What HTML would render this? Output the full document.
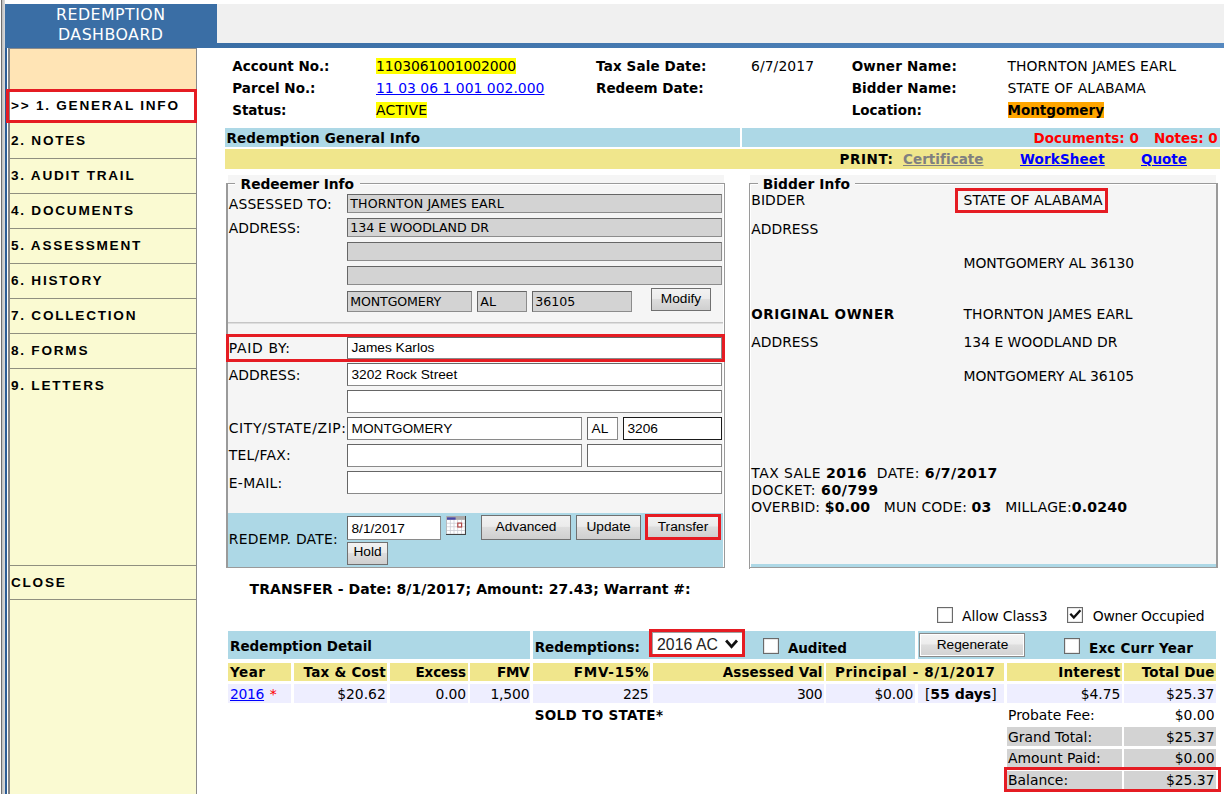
<!DOCTYPE html>
<html lang="en"><head><meta charset="utf-8"><title>Redemption Dashboard</title>
<style>
html,body{margin:0;padding:0;background:#fff;}
body{width:1224px;height:794px;position:relative;overflow:hidden;font-family:"DejaVu Sans", "Liberation Sans", sans-serif;color:#000;}
.t{position:absolute;white-space:nowrap;margin:0;padding:0;}
.r{position:absolute;margin:0;padding:0;}
.a{font-family:"Liberation Sans", sans-serif;}
a{color:#0000ff;text-decoration:underline;}
b{font-weight:bold;font-size:14.1px;}
</style></head><body>
<div class="r " style="left:1px;top:0px;width:1px;height:794px;background:#707070;"></div>
<div class="r " style="left:2px;top:0px;width:3px;height:794px;background:linear-gradient(90deg,#bdbdbd,#dcdcdc);"></div>
<div class="r " style="left:5px;top:4px;width:2px;height:790px;background:#2c5d96;"></div>
<div class="r " style="left:5px;top:4px;width:212px;height:44px;background:#3a6ea5;"></div>
<div class="r " style="left:217px;top:4px;width:1007px;height:39px;background:#f0f0f0;"></div>
<div class="r " style="left:217px;top:43px;width:1007px;height:5px;background:linear-gradient(90deg,#3a6ea5,#5588bf);"></div>
<div class="t" style="top:4.00px;font-size:15.8px;line-height:21px;left:56.00px;color:#fff;letter-spacing:0.464px;">REDEMPTION</div>
<div class="t" style="top:24.00px;font-size:15.8px;line-height:21px;left:58.00px;color:#fff;letter-spacing:0.467px;">DASHBOARD</div>
<div class="r " style="left:8px;top:48px;width:189px;height:746px;background:#fafad2;border:1px solid #8a8a8a;border-left:2px solid #858585;border-bottom:none;box-sizing:border-box;"></div>
<div class="r " style="left:10px;top:49px;width:186px;height:40px;background:#ffe4b5;"></div>
<div class="r " style="left:10px;top:158px;width:186px;height:1px;background:#8f8f80;"></div>
<div class="r " style="left:10px;top:193px;width:186px;height:1px;background:#8f8f80;"></div>
<div class="r " style="left:10px;top:228px;width:186px;height:1px;background:#8f8f80;"></div>
<div class="r " style="left:10px;top:263px;width:186px;height:1px;background:#8f8f80;"></div>
<div class="r " style="left:10px;top:298px;width:186px;height:1px;background:#8f8f80;"></div>
<div class="r " style="left:10px;top:333px;width:186px;height:1px;background:#8f8f80;"></div>
<div class="r " style="left:10px;top:368px;width:186px;height:1px;background:#8f8f80;"></div>
<div class="r " style="left:10px;top:565px;width:186px;height:1px;background:#8f8f80;"></div>
<div class="r " style="left:10px;top:599px;width:186px;height:1px;background:#8f8f80;"></div>
<div class="r " style="left:10px;top:89px;width:186px;height:34px;background:#fff;"></div>
<div class="r " style="left:6px;top:89px;width:191px;height:34px;border:3px solid #e51c23;box-sizing:border-box;"></div>
<div class="t a" style="top:97.00px;font-size:13.6px;line-height:18px;left:11.00px;font-weight:bold;color:#000;letter-spacing:1.750px;">&gt;&gt; 1. GENERAL INFO</div>
<div class="t a" style="top:132.00px;font-size:13.6px;line-height:18px;left:11.00px;font-weight:bold;color:#000;letter-spacing:1.750px;">2. NOTES</div>
<div class="t a" style="top:167.00px;font-size:13.6px;line-height:18px;left:11.00px;font-weight:bold;color:#000;letter-spacing:1.750px;">3. AUDIT TRAIL</div>
<div class="t a" style="top:202.00px;font-size:13.6px;line-height:18px;left:11.00px;font-weight:bold;color:#000;letter-spacing:1.750px;">4. DOCUMENTS</div>
<div class="t a" style="top:237.00px;font-size:13.6px;line-height:18px;left:11.00px;font-weight:bold;color:#000;letter-spacing:1.750px;">5. ASSESSMENT</div>
<div class="t a" style="top:272.00px;font-size:13.6px;line-height:18px;left:11.00px;font-weight:bold;color:#000;letter-spacing:1.750px;">6. HISTORY</div>
<div class="t a" style="top:307.00px;font-size:13.6px;line-height:18px;left:11.00px;font-weight:bold;color:#000;letter-spacing:1.750px;">7. COLLECTION</div>
<div class="t a" style="top:342.00px;font-size:13.6px;line-height:18px;left:11.00px;font-weight:bold;color:#000;letter-spacing:1.750px;">8. FORMS</div>
<div class="t a" style="top:377.00px;font-size:13.6px;line-height:18px;left:11.00px;font-weight:bold;color:#000;letter-spacing:1.750px;">9. LETTERS</div>
<div class="t a" style="top:574.00px;font-size:13.6px;line-height:18px;left:11.00px;font-weight:bold;color:#000;letter-spacing:1.750px;">CLOSE</div>
<div class="t" style="top:57.00px;font-size:13.5px;line-height:18px;left:232.30px;font-weight:bold;letter-spacing:-0.000px;">Account No.:</div>
<div class="t" style="top:79.00px;font-size:13.5px;line-height:18px;left:232.30px;font-weight:bold;letter-spacing:0.031px;">Parcel No.:</div>
<div class="t" style="top:101.00px;font-size:13.5px;line-height:18px;left:232.30px;font-weight:bold;letter-spacing:-0.099px;">Status:</div>
<div class="t" style="top:57.00px;font-size:13.9px;line-height:18px;left:376.00px;letter-spacing:-0.094px;"><span style="background:#ff0">1103061001002000</span></div>
<div class="t" style="top:79.00px;font-size:13.9px;line-height:18px;left:376.00px;letter-spacing:0.024px;"><a>11 03 06 1 001 002.000</a></div>
<div class="t" style="top:101.00px;font-size:13.9px;line-height:18px;left:376.00px;letter-spacing:0.234px;"><span style="background:#ff0">ACTIVE</span></div>
<div class="t" style="top:57.00px;font-size:13.5px;line-height:18px;left:596.10px;font-weight:bold;letter-spacing:0.128px;">Tax Sale Date:</div>
<div class="t" style="top:79.00px;font-size:13.5px;line-height:18px;left:596.10px;font-weight:bold;letter-spacing:-0.011px;">Redeem Date:</div>
<div class="t" style="top:57.00px;font-size:13.9px;line-height:18px;left:751.00px;letter-spacing:0.087px;">6/7/2017</div>
<div class="t" style="top:57.00px;font-size:13.5px;line-height:18px;left:851.70px;font-weight:bold;letter-spacing:0.199px;">Owner Name:</div>
<div class="t" style="top:79.00px;font-size:13.5px;line-height:18px;left:851.70px;font-weight:bold;letter-spacing:0.118px;">Bidder Name:</div>
<div class="t" style="top:101.00px;font-size:13.5px;line-height:18px;left:851.70px;font-weight:bold;letter-spacing:-0.007px;">Location:</div>
<div class="t" style="top:57.00px;font-size:13.9px;line-height:18px;left:1007.50px;letter-spacing:0.075px;">THORNTON JAMES EARL</div>
<div class="t" style="top:79.00px;font-size:13.9px;line-height:18px;left:1007.50px;letter-spacing:0.063px;">STATE OF ALABAMA</div>
<div class="t" style="top:101.00px;font-size:13.5px;line-height:18px;left:1007.50px;font-weight:bold;letter-spacing:0.010px;"><span style="background:#ffa500">Montgomery</span></div>
<div class="r " style="left:225px;top:128px;width:515px;height:19px;background:#add8e6;"></div>
<div class="r " style="left:742px;top:128px;width:478px;height:19px;background:#add8e6;"></div>
<div class="r " style="left:225px;top:149px;width:995px;height:19.5px;background:#f0e68c;"></div>
<div class="t" style="top:129.00px;font-size:13.5px;line-height:18px;left:226.50px;font-weight:bold;letter-spacing:0.129px;">Redemption General Info</div>
<div class="t" style="top:129.00px;font-size:13.5px;line-height:18px;left:1033.40px;font-weight:bold;color:#f00;letter-spacing:0.062px;">Documents: 0</div>
<div class="t" style="top:129.00px;font-size:13.5px;line-height:18px;left:1154.00px;font-weight:bold;color:#f00;letter-spacing:-0.003px;">Notes: 0</div>
<div class="t" style="top:150.00px;font-size:13.5px;line-height:18px;left:839.50px;font-weight:bold;letter-spacing:0.603px;">PRINT:</div>
<div class="t" style="top:150.00px;font-size:13.5px;line-height:18px;left:903.00px;font-weight:bold;letter-spacing:0.047px;"><a style="color:#808080">Certificate</a></div>
<div class="t" style="top:150.00px;font-size:13.5px;line-height:18px;left:1020.00px;font-weight:bold;letter-spacing:0.147px;"><a>WorkSheet</a></div>
<div class="t" style="top:150.00px;font-size:13.5px;line-height:18px;left:1141.00px;font-weight:bold;letter-spacing:0.004px;"><a>Quote</a></div>
<div class="r " style="left:228px;top:175px;width:496px;height:392px;background:#f5f5f5;"></div>
<div class="r " style="left:226px;top:183px;width:2px;height:385px;background:#9a9a9a;"></div>
<div class="r " style="left:228px;top:183px;width:497px;height:1px;background:#9a9a9a;"></div>
<div class="r " style="left:228px;top:184px;width:496px;height:1px;background:#fff;"></div>
<div class="r " style="left:723px;top:185px;width:1px;height:382px;background:#fff;"></div>
<div class="r " style="left:724px;top:184px;width:1px;height:384px;background:#9a9a9a;"></div>
<div class="r " style="left:226px;top:567px;width:499px;height:1px;background:#9a9a9a;"></div>
<div class="r " style="left:235px;top:176px;width:125px;height:16px;background:#f5f5f5;"></div>
<div class="t" style="top:175.00px;font-size:13.8px;line-height:18px;left:240.60px;font-weight:bold;letter-spacing:-0.080px;">Redeemer Info</div>
<div class="t" style="top:195.00px;font-size:13.9px;line-height:18px;left:228.80px;letter-spacing:0.146px;">ASSESSED TO:</div>
<div class="t" style="top:219.00px;font-size:13.9px;line-height:18px;left:228.80px;letter-spacing:-0.006px;">ADDRESS:</div>
<div class="r " style="left:347px;top:194px;width:375px;height:18.5px;background:#d3d3d3;border:1px solid #8c8c8c;border-top-color:#666;border-left-color:#666;box-sizing:border-box;"></div>
<div class="t" style="top:196.00px;font-size:12.6px;line-height:16px;left:350.30px;letter-spacing:0.103px;">THORNTON JAMES EARL</div>
<div class="r " style="left:347px;top:218px;width:375px;height:18.5px;background:#d3d3d3;border:1px solid #8c8c8c;border-top-color:#666;border-left-color:#666;box-sizing:border-box;"></div>
<div class="t" style="top:220.00px;font-size:12.6px;line-height:16px;left:350.30px;letter-spacing:-0.048px;">134 E WOODLAND DR</div>
<div class="r " style="left:347px;top:242px;width:375px;height:18.5px;background:#d3d3d3;border:1px solid #8c8c8c;border-top-color:#666;border-left-color:#666;box-sizing:border-box;"></div>
<div class="r " style="left:347px;top:266px;width:375px;height:18.5px;background:#d3d3d3;border:1px solid #8c8c8c;border-top-color:#666;border-left-color:#666;box-sizing:border-box;"></div>
<div class="r " style="left:347px;top:291px;width:125px;height:21px;background:#d3d3d3;border:1px solid #8c8c8c;border-top-color:#666;border-left-color:#666;box-sizing:border-box;"></div>
<div class="t" style="top:294.00px;font-size:12.6px;line-height:16px;left:350.30px;letter-spacing:-0.126px;">MONTGOMERY</div>
<div class="r " style="left:477px;top:291px;width:50px;height:21px;background:#d3d3d3;border:1px solid #8c8c8c;border-top-color:#666;border-left-color:#666;box-sizing:border-box;"></div>
<div class="t" style="top:294.00px;font-size:12.6px;line-height:16px;left:480.30px;">AL</div>
<div class="r " style="left:532px;top:291px;width:100px;height:21px;background:#d3d3d3;border:1px solid #8c8c8c;border-top-color:#666;border-left-color:#666;box-sizing:border-box;"></div>
<div class="t" style="top:294.00px;font-size:12.6px;line-height:16px;left:535.30px;">36105</div>
<div class="r " style="left:651px;top:288px;width:60px;height:23px;border:1px solid #707070;box-sizing:border-box;background:linear-gradient(#f2f2f2,#ebebeb 45%,#dddddd 50%,#cfcfcf);"></div>
<div class="t a" style="top:290.00px;font-size:13.7px;line-height:18px;left:651.00px;width:60px;text-align:center;">Modify</div>
<div class="r " style="left:228px;top:322px;width:495px;height:1px;background:#c6c6c6;"></div>
<div class="r " style="left:228px;top:323px;width:495px;height:1px;background:#dedede;"></div>
<div class="r " style="left:347px;top:337px;width:375px;height:21.5px;background:#fff;border:1px solid #8a8a8a;border-top-color:#666;border-left-color:#666;box-sizing:border-box;"></div>
<div class="t a" style="top:339.00px;font-size:13.7px;line-height:18px;left:351.50px;">James Karlos</div>
<div class="r " style="left:226px;top:334px;width:499px;height:27.5px;border:3px solid #e51c23;box-sizing:border-box;"></div>
<div class="t" style="top:339.00px;font-size:13.9px;line-height:18px;left:228.80px;letter-spacing:0.700px;">PAID BY:</div>
<div class="t" style="top:366.00px;font-size:13.9px;line-height:18px;left:228.80px;letter-spacing:-0.006px;">ADDRESS:</div>
<div class="r " style="left:347px;top:363px;width:375px;height:23px;background:#fff;border:1px solid #8a8a8a;border-top-color:#666;border-left-color:#666;box-sizing:border-box;"></div>
<div class="t a" style="top:366.00px;font-size:13.7px;line-height:18px;left:351.50px;">3202 Rock Street</div>
<div class="r " style="left:347px;top:390px;width:375px;height:23px;background:#fff;border:1px solid #8a8a8a;border-top-color:#666;border-left-color:#666;box-sizing:border-box;"></div>
<div class="t" style="top:419.00px;font-size:13.9px;line-height:18px;left:228.80px;letter-spacing:0.607px;">CITY/STATE/ZIP:</div>
<div class="r " style="left:347px;top:417px;width:234.5px;height:23px;background:#fff;border:1px solid #8a8a8a;border-top-color:#666;border-left-color:#666;box-sizing:border-box;"></div>
<div class="t a" style="top:420.00px;font-size:13.7px;line-height:18px;left:351.50px;">MONTGOMERY</div>
<div class="r " style="left:587px;top:417px;width:31px;height:23px;background:#fff;border:1px solid #8a8a8a;border-top-color:#666;border-left-color:#666;box-sizing:border-box;"></div>
<div class="t a" style="top:420.00px;font-size:13.7px;line-height:18px;left:591.50px;">AL</div>
<div class="r " style="left:623px;top:417px;width:99px;height:23px;background:#fff;border:1.5px solid #1a1a1a;box-sizing:border-box;"></div>
<div class="t a" style="top:420.00px;font-size:13.7px;line-height:18px;left:627.50px;">3206</div>
<div class="t" style="top:446.00px;font-size:13.9px;line-height:18px;left:228.80px;letter-spacing:0.258px;">TEL/FAX:</div>
<div class="r " style="left:347px;top:444px;width:234.5px;height:23px;background:#fff;border:1px solid #8a8a8a;border-top-color:#666;border-left-color:#666;box-sizing:border-box;"></div>
<div class="r " style="left:587px;top:444px;width:135px;height:23px;background:#fff;border:1px solid #8a8a8a;border-top-color:#666;border-left-color:#666;box-sizing:border-box;"></div>
<div class="t" style="top:474.00px;font-size:13.9px;line-height:18px;left:228.80px;letter-spacing:0.284px;">E-MAIL:</div>
<div class="r " style="left:347px;top:471px;width:375px;height:23px;background:#fff;border:1px solid #8a8a8a;border-top-color:#666;border-left-color:#666;box-sizing:border-box;"></div>
<div class="r " style="left:228px;top:513px;width:495px;height:54px;background:#add8e6;"></div>
<div class="t" style="top:530.00px;font-size:13.9px;line-height:18px;left:228.80px;letter-spacing:0.271px;">REDEMP. DATE:</div>
<div class="r " style="left:347px;top:516px;width:94px;height:23.5px;background:#fff;border:1px solid #8a8a8a;border-top-color:#666;border-left-color:#666;box-sizing:border-box;"></div>
<div class="t a" style="top:520.00px;font-size:13.7px;line-height:18px;left:351.50px;">8/1/2017</div>
<svg class="r" style="left:446px;top:516px" width="20" height="19" viewBox="0 0 20 19">
<rect x="0" y="0" width="20" height="19" fill="#cdcdd4"/>
<rect x="0" y="0" width="19" height="3.7" fill="#aaa"/><rect x="0" y="0" width="0.8" height="19" fill="#b4b4b4"/>
<rect x="1" y="1.4" width="8.6" height="2.3" fill="#4848a8"/>
<rect x="1.00" y="4.00" width="2.9" height="2.8" fill="#fff"/><rect x="4.70" y="4.00" width="2.9" height="2.8" fill="#fff"/><rect x="8.40" y="4.00" width="2.9" height="2.8" fill="#fff"/><rect x="12.10" y="4.00" width="2.9" height="2.8" fill="#fff"/><rect x="15.80" y="4.00" width="2.9" height="2.8" fill="#fff"/><rect x="1.00" y="7.60" width="2.9" height="2.8" fill="#fff"/><rect x="4.70" y="7.60" width="2.9" height="2.8" fill="#fff"/><rect x="8.40" y="7.60" width="2.9" height="2.8" fill="#fff"/><rect x="12.10" y="7.60" width="2.9" height="2.8" fill="#fff"/><rect x="15.80" y="7.60" width="2.9" height="2.8" fill="#fff"/><rect x="1.00" y="11.20" width="2.9" height="2.8" fill="#fff"/><rect x="4.70" y="11.20" width="2.9" height="2.8" fill="#fff"/><rect x="8.40" y="11.20" width="2.9" height="2.8" fill="#fff"/><rect x="12.10" y="11.20" width="2.9" height="2.8" fill="#fff"/><rect x="15.80" y="11.20" width="2.9" height="2.8" fill="#fff"/><rect x="1.00" y="14.80" width="2.9" height="2.8" fill="#fff"/><rect x="4.70" y="14.80" width="2.9" height="2.8" fill="#fff"/><rect x="8.40" y="14.80" width="2.9" height="2.8" fill="#fff"/><rect x="12.10" y="14.80" width="2.9" height="2.8" fill="#fff"/><rect x="15.80" y="14.80" width="2.9" height="2.8" fill="#fff"/>
<rect x="11.8" y="7.1" width="3.8" height="3.9" fill="#fff" stroke="#b04848" stroke-width="1.2"/>
<rect x="19" y="0" width="1" height="19" fill="#444"/><rect x="0" y="18" width="20" height="1" fill="#444"/>
</svg>
<div class="r " style="left:481px;top:515px;width:90px;height:24.5px;border:1px solid #707070;box-sizing:border-box;background:linear-gradient(#f2f2f2,#ebebeb 45%,#dddddd 50%,#cfcfcf);"></div>
<div class="t a" style="top:518.00px;font-size:13.7px;line-height:18px;left:481.00px;width:90px;text-align:center;">Advanced</div>
<div class="r " style="left:576px;top:515px;width:65px;height:24.5px;border:1px solid #707070;box-sizing:border-box;background:linear-gradient(#f2f2f2,#ebebeb 45%,#dddddd 50%,#cfcfcf);"></div>
<div class="t a" style="top:518.00px;font-size:13.7px;line-height:18px;left:576.00px;width:65px;text-align:center;">Update</div>
<div class="r " style="left:646px;top:515px;width:74px;height:24px;border:1px solid #707070;box-sizing:border-box;background:linear-gradient(#f2f2f2,#ebebeb 45%,#dddddd 50%,#cfcfcf);"></div>
<div class="t a" style="top:518.00px;font-size:13.7px;line-height:18px;left:646.00px;width:74px;text-align:center;">Transfer</div>
<div class="r " style="left:645px;top:514px;width:76px;height:26px;border:3px solid #e51c23;box-sizing:border-box;"></div>
<div class="r " style="left:347px;top:541.5px;width:41px;height:23.0px;border:1px solid #707070;box-sizing:border-box;background:linear-gradient(#f2f2f2,#ebebeb 45%,#dddddd 50%,#cfcfcf);"></div>
<div class="t a" style="top:543.00px;font-size:13.7px;line-height:18px;left:347.00px;width:41px;text-align:center;">Hold</div>
<div class="r " style="left:750px;top:175px;width:466px;height:392px;background:#f5f5f5;"></div>
<div class="r " style="left:749px;top:183px;width:1px;height:386px;background:#9a9a9a;"></div>
<div class="r " style="left:750px;top:185px;width:1px;height:382px;background:#fff;"></div>
<div class="r " style="left:750px;top:183px;width:468px;height:1px;background:#9a9a9a;"></div>
<div class="r " style="left:751px;top:184px;width:465px;height:1px;background:#fff;"></div>
<div class="r " style="left:1216px;top:184px;width:2px;height:384px;background:#9a9a9a;"></div>
<div class="r " style="left:751px;top:564px;width:465px;height:3px;background:#add8e6;"></div>
<div class="r " style="left:750px;top:567px;width:468px;height:1px;background:#9a9a9a;"></div>
<div class="r " style="left:758px;top:176px;width:96.5px;height:16px;background:#f5f5f5;"></div>
<div class="t" style="top:175.00px;font-size:13.8px;line-height:18px;left:762.70px;font-weight:bold;letter-spacing:0.089px;">Bidder Info</div>
<div class="t" style="top:191.00px;font-size:13.9px;line-height:18px;left:751.30px;letter-spacing:0.089px;">BIDDER</div>
<div class="t" style="top:220.00px;font-size:13.9px;line-height:18px;left:751.30px;">ADDRESS</div>
<div class="t" style="top:191.00px;font-size:13.9px;line-height:18px;left:963.50px;letter-spacing:0.110px;">STATE OF ALABAMA</div>
<div class="r " style="left:955px;top:188px;width:153px;height:25px;border:3px solid #e51c23;box-sizing:border-box;"></div>
<div class="t" style="top:254.00px;font-size:13.9px;line-height:18px;left:963.50px;letter-spacing:-0.070px;">MONTGOMERY AL 36130</div>
<div class="t" style="top:305.00px;font-size:13.5px;line-height:18px;left:751.30px;font-weight:bold;letter-spacing:0.581px;">ORIGINAL OWNER</div>
<div class="t" style="top:305.00px;font-size:13.9px;line-height:18px;left:963.50px;letter-spacing:0.102px;">THORNTON JAMES EARL</div>
<div class="t" style="top:333.00px;font-size:13.9px;line-height:18px;left:751.30px;">ADDRESS</div>
<div class="t" style="top:333.00px;font-size:13.9px;line-height:18px;left:963.50px;">134 E WOODLAND DR</div>
<div class="t" style="top:367.00px;font-size:13.9px;line-height:18px;left:963.50px;letter-spacing:-0.070px;">MONTGOMERY AL 36105</div>
<div class="t" style="top:464.00px;font-size:13.9px;line-height:18px;left:751.30px;letter-spacing:0.471px;">TAX SALE <b>2016</b>&nbsp; DATE: <b>6/7/2017</b></div>
<div class="t" style="top:481.00px;font-size:13.9px;line-height:18px;left:751.30px;letter-spacing:0.556px;">DOCKET: <b>60/799</b></div>
<div class="t" style="top:498.00px;font-size:13.9px;line-height:18px;left:751.30px;letter-spacing:0.156px;">OVERBID: <b>$0.00</b> &nbsp; MUN CODE: <b>03</b> &nbsp; MILLAGE:<b>0.0240</b></div>
<div class="t" style="top:580.00px;font-size:14.0px;line-height:18px;left:249.60px;font-weight:bold;letter-spacing:0.047px;">TRANSFER - Date: 8/1/2017; Amount: 27.43; Warrant #:</div>
<div class="r " style="left:937px;top:607.3px;width:16px;height:16.0px;background:#fff;border:1px solid #6a6a6a;box-sizing:border-box;box-shadow:inset 0 0 0 0.5px rgba(120,120,120,.35);"></div>
<div class="t" style="top:607.00px;font-size:13.9px;line-height:18px;left:962.00px;letter-spacing:-0.108px;">Allow Class3</div>
<div class="r " style="left:1067px;top:607.3px;width:16px;height:16.0px;background:#fff;border:1px solid #6a6a6a;box-sizing:border-box;box-shadow:inset 0 0 0 0.5px rgba(120,120,120,.35);"></div>
<svg class="r" style="left:1067px;top:607.3px" width="16" height="16" viewBox="0 0 16 16"><path d="M3.3 6.8 L6.8 10.6 L13.4 3.2" fill="none" stroke="#111" stroke-width="2.3"/></svg>
<div class="t" style="top:607.00px;font-size:13.9px;line-height:18px;left:1092.70px;letter-spacing:-0.233px;">Owner Occupied</div>
<div class="r " style="left:228px;top:631px;width:302px;height:28px;background:#add8e6;"></div>
<div class="r " style="left:533px;top:631px;width:382px;height:28px;background:#add8e6;"></div>
<div class="r " style="left:918px;top:631px;width:298px;height:28px;background:#add8e6;"></div>
<div class="t" style="top:637.00px;font-size:13.5px;line-height:18px;left:230.00px;font-weight:bold;letter-spacing:0.003px;">Redemption Detail</div>
<div class="t" style="top:638.00px;font-size:13.5px;line-height:18px;left:534.70px;font-weight:bold;letter-spacing:-0.020px;">Redemptions:</div>
<div class="r " style="left:651.5px;top:631.5px;width:91.0px;height:23.0px;background:#fff;border:1px solid #a0a0a0;box-sizing:border-box;"></div>
<div class="t a" style="top:634.00px;font-size:15.8px;line-height:21px;left:656.90px;color:#222;letter-spacing:0.082px;">2016 AC</div>
<svg class="r" style="left:723px;top:637px" width="18" height="14" viewBox="0 0 18 14"><path d="M3.1 3.5 L8.55 9.7 L14 3.5" fill="none" stroke="#111" stroke-width="2.7"/></svg>
<div class="r " style="left:649px;top:629px;width:96px;height:28px;border:3px solid #e51c23;box-sizing:border-box;"></div>
<div class="r " style="left:763px;top:638px;width:16px;height:16px;background:#fff;border:1px solid #6a6a6a;box-sizing:border-box;box-shadow:inset 0 0 0 0.5px rgba(120,120,120,.35);"></div>
<div class="t" style="top:639.00px;font-size:13.5px;line-height:18px;left:788.00px;font-weight:bold;letter-spacing:-0.104px;">Audited</div>
<div class="r " style="left:919px;top:633px;width:106px;height:24px;border:1px solid #8a8a8a;box-sizing:border-box;box-shadow:inset 0 0 0 1px #fff;background:linear-gradient(#f4f4f4,#ededed 45%,#dedede 50%,#d2d2d2);"></div>
<div class="t a" style="top:636.00px;font-size:13.7px;line-height:18px;left:919.00px;width:107px;text-align:center;">Regenerate</div>
<div class="r " style="left:1064px;top:638px;width:16px;height:16px;background:#fff;border:1px solid #6a6a6a;box-sizing:border-box;box-shadow:inset 0 0 0 0.5px rgba(120,120,120,.35);"></div>
<div class="t" style="top:639.00px;font-size:13.5px;line-height:18px;left:1089.00px;font-weight:bold;letter-spacing:0.197px;">Exc Curr Year</div>
<div class="r " style="left:228px;top:662.5px;width:63px;height:18.5px;background:#f0e68c;"></div>
<div class="t" style="top:663.00px;font-size:13.5px;line-height:18px;left:230.00px;font-weight:bold;letter-spacing:0.510px;">Year</div>
<div class="r " style="left:293.5px;top:662.5px;width:93.5px;height:18.5px;background:#f0e68c;"></div>
<div class="t" style="top:663.00px;font-size:13.5px;line-height:18px;left:303.50px;font-weight:bold;letter-spacing:0.240px;">Tax &amp; Cost</div>
<div class="r " style="left:390px;top:662.5px;width:78px;height:18.5px;background:#f0e68c;"></div>
<div class="t" style="top:663.00px;font-size:13.5px;line-height:18px;left:415.40px;font-weight:bold;letter-spacing:-0.094px;">Excess</div>
<div class="r " style="left:470px;top:662.5px;width:60px;height:18.5px;background:#f0e68c;"></div>
<div class="t" style="top:663.00px;font-size:13.5px;line-height:18px;left:497.10px;font-weight:bold;letter-spacing:-0.355px;">FMV</div>
<div class="r " style="left:533px;top:662.5px;width:117px;height:18.5px;background:#f0e68c;"></div>
<div class="t" style="top:663.00px;font-size:13.5px;line-height:18px;left:573.70px;font-weight:bold;letter-spacing:0.809px;">FMV-15%</div>
<div class="r " style="left:652.5px;top:662.5px;width:171.5px;height:18.5px;background:#f0e68c;"></div>
<div class="t" style="top:663.00px;font-size:13.5px;line-height:18px;left:722.80px;font-weight:bold;letter-spacing:0.089px;">Assessed Val</div>
<div class="r " style="left:826px;top:662.5px;width:178px;height:18.5px;background:#f0e68c;"></div>
<div class="t" style="top:663.00px;font-size:13.5px;line-height:18px;left:834.90px;font-weight:bold;letter-spacing:0.629px;">Principal - 8/1/2017</div>
<div class="r " style="left:1006.5px;top:662.5px;width:115.5px;height:18.5px;background:#f0e68c;"></div>
<div class="t" style="top:663.00px;font-size:13.5px;line-height:18px;left:1058.30px;font-weight:bold;letter-spacing:0.208px;">Interest</div>
<div class="r " style="left:1124px;top:662.5px;width:92px;height:18.5px;background:#f0e68c;"></div>
<div class="t" style="top:663.00px;font-size:13.5px;line-height:18px;left:1141.80px;font-weight:bold;letter-spacing:0.130px;">Total Due</div>
<div class="r " style="left:228px;top:684px;width:63px;height:18.5px;background:#eeeeff;"></div>
<div class="r " style="left:293.5px;top:684px;width:93.5px;height:18.5px;background:#eeeeff;"></div>
<div class="t" style="top:685.00px;font-size:13.9px;line-height:18px;left:337.20px;letter-spacing:-0.002px;">$20.62</div>
<div class="r " style="left:390px;top:684px;width:78px;height:18.5px;background:#eeeeff;"></div>
<div class="t" style="top:685.00px;font-size:13.9px;line-height:18px;left:435.60px;letter-spacing:-0.146px;">0.00</div>
<div class="r " style="left:470px;top:684px;width:60px;height:18.5px;background:#eeeeff;"></div>
<div class="t" style="top:685.00px;font-size:13.9px;line-height:18px;left:490.40px;letter-spacing:-0.170px;">1,500</div>
<div class="r " style="left:533px;top:684px;width:117px;height:18.5px;background:#eeeeff;"></div>
<div class="t" style="top:685.00px;font-size:13.9px;line-height:18px;left:623.00px;letter-spacing:-0.458px;">225</div>
<div class="r " style="left:652.5px;top:684px;width:171.5px;height:18.5px;background:#eeeeff;"></div>
<div class="t" style="top:685.00px;font-size:13.9px;line-height:18px;left:796.90px;letter-spacing:-0.458px;">300</div>
<div class="r " style="left:826px;top:684px;width:89px;height:18.5px;background:#eeeeff;"></div>
<div class="t" style="top:685.00px;font-size:13.9px;line-height:18px;left:874.50px;letter-spacing:-0.220px;">$0.00</div>
<div class="r " style="left:918px;top:684px;width:86px;height:18.5px;background:#eeeeff;"></div>
<div class="t" style="top:685.00px;font-size:13.9px;line-height:18px;left:925.00px;letter-spacing:-0.064px;">[<b>55 days</b>]</div>
<div class="r " style="left:1006.5px;top:684px;width:115.5px;height:18.5px;background:#eeeeff;"></div>
<div class="t" style="top:685.00px;font-size:13.9px;line-height:18px;left:1080.70px;letter-spacing:-0.045px;">$4.75</div>
<div class="r " style="left:1124px;top:684px;width:92px;height:18.5px;background:#eeeeff;"></div>
<div class="t" style="top:685.00px;font-size:13.9px;line-height:18px;left:1165.90px;letter-spacing:-0.022px;">$25.37</div>
<div class="t" style="top:685.00px;font-size:13.9px;line-height:18px;left:230.00px;letter-spacing:-0.320px;"><a>2016</a></div>
<div class="t" style="top:685.00px;font-size:13.9px;line-height:18px;left:269.80px;"><span style="color:#f00">*</span></div>
<div class="t" style="top:706.00px;font-size:13.5px;line-height:18px;left:534.70px;font-weight:bold;letter-spacing:0.340px;">SOLD TO STATE*</div>
<div class="t" style="top:706.00px;font-size:13.9px;line-height:18px;left:1008.00px;">Probate Fee:</div>
<div class="t" style="top:706.00px;font-size:13.9px;line-height:18px;right:9.50px;">$0.00</div>
<div class="r " style="left:1006.5px;top:727px;width:115.5px;height:19px;background:#d3d3d3;"></div>
<div class="r " style="left:1124px;top:727px;width:92px;height:19px;background:#d3d3d3;"></div>
<div class="t" style="top:728.00px;font-size:13.9px;line-height:18px;left:1008.00px;">Grand Total:</div>
<div class="t" style="top:728.00px;font-size:13.9px;line-height:18px;right:9.50px;">$25.37</div>
<div class="r " style="left:1006.5px;top:749px;width:115.5px;height:18.5px;background:#d3d3d3;"></div>
<div class="r " style="left:1124px;top:749px;width:92px;height:18.5px;background:#d3d3d3;"></div>
<div class="t" style="top:749.00px;font-size:13.9px;line-height:18px;left:1008.00px;">Amount Paid:</div>
<div class="t" style="top:749.00px;font-size:13.9px;line-height:18px;right:9.50px;">$0.00</div>
<div class="r " style="left:1006.5px;top:770.5px;width:115.5px;height:18.5px;background:#d3d3d3;"></div>
<div class="r " style="left:1124px;top:770.5px;width:92px;height:18.5px;background:#d3d3d3;"></div>
<div class="t" style="top:771.00px;font-size:13.9px;line-height:18px;left:1008.00px;">Balance:</div>
<div class="t" style="top:771.00px;font-size:13.9px;line-height:18px;right:9.50px;">$25.37</div>
<div class="r " style="left:1003.5px;top:767.3px;width:217.5px;height:24.700000000000045px;border:3px solid #e51c23;box-sizing:border-box;"></div>
</body></html>
